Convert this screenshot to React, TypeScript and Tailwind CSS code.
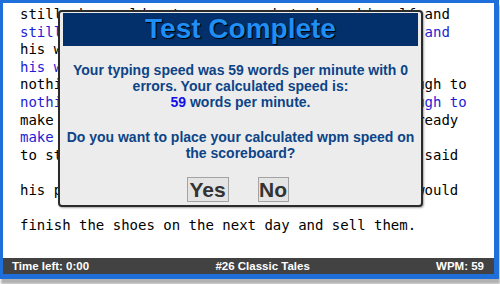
import React from "react";

const lines: { text: string; typed?: boolean }[] = [
  { text: "still, he could not earn enough to keep himself and" },
  { text: "still, he could not earn enough to keep himself and", typed: true },
  { text: "his wife. At last he had" },
  { text: "his wife. At last he had", typed: true },
  { text: "nothing left in the world, but leather just enough to" },
  { text: "nothing left in the world, but leather just enough to", typed: true },
  { text: "make one pair of shoes. In the evening, he got ready" },
  { text: "make one pair of shoes. In th", typed: true },
  { text: "to start on them in the morning. Before bed, he said" },
  { text: "", typed: true },
  { text: "his prayers, and went to sleep, hoping that he would" },
  { text: "", typed: true },
  { text: "finish the shoes on the next day and sell them." },
];

export default function App() {
  return (
    <div className="w-[500px] h-[284px] bg-white">
      <div className="w-[499px] h-[279px] flex flex-col border-solid border-[#1e6fd9] border-t-[3px] border-l-[3px] border-r-[5px] border-b-[5px] shadow-[1px_5px_2px_rgba(0,0,0,0.3)]">
        <div className="relative flex-1 bg-white pl-[17px] pt-[3px] overflow-hidden">
          <div className="font-['DejaVu_Sans_Mono',monospace] text-[14px] leading-[17.6px] whitespace-pre">
            {lines.map((l, i) => (
              <div
                key={i}
                className={
                  l.typed
                    ? "h-[17.6px] text-[#1d1dd4]"
                    : "h-[17.6px] text-black"
                }
              >
                {l.text}
              </div>
            ))}
          </div>

          <div className="absolute z-10 left-[55px] top-[7px] w-[365px] flex flex-col border-2 border-solid border-[#2b2b2b] rounded-[4px] bg-[#ececec] shadow-[1px_1px_2px_rgba(0,0,0,0.35)] font-['Liberation_Sans',Arial,sans-serif]">
            <div className="mt-[1px] ml-[3px] mr-[3px] h-[33px] bg-[#03306a] text-center">
              <span className="text-[28px] leading-[31px] font-bold text-[#1f8ef5] [text-shadow:0_0_1px_#000,1px_1px_1px_#000]">
                Test Complete
              </span>
            </div>
            <div className="pt-[16px] text-center text-[14px] leading-[16px] font-bold text-[#0c4487]">
              <p>
                Your typing speed was 59 words per minute with 0
                <br />
                errors. Your calculated speed is:
                <br />
                <span className="text-[#1010e8]">59</span> words per minute.
              </p>
              <p className="mt-[19px]">
                Do you want to place your calculated wpm speed on
                <br />
                the scoreboard?
              </p>
            </div>
            <div className="mt-[16px] mb-[3px] flex justify-center gap-[29px] pr-[6px]">
              <button className="w-[42px] h-[25px] border border-solid border-[#a3a3a3] bg-[#e4e4e4] text-[21px] leading-[23px] font-bold text-[#333333] text-center p-0">
                Yes
              </button>
              <button className="w-[31px] h-[25px] border border-solid border-[#a3a3a3] bg-[#e4e4e4] text-[21px] leading-[23px] font-bold text-[#333333] text-center p-0">
                No
              </button>
            </div>
          </div>
        </div>
        <div className="h-[16px] bg-[#424242] flex items-center justify-between pl-[9px] pr-[10px] font-['Liberation_Sans',Arial,sans-serif] text-[11.5px] leading-[16px] font-bold text-white">
          <span>Time left: 0:00</span>
          <span>#26 Classic Tales</span>
          <span>WPM: 59</span>
        </div>
      </div>
    </div>
  );
}
